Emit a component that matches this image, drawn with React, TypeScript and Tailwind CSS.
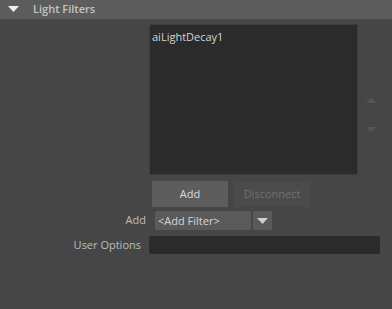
import React from 'react';

const font = { fontFamily: '"Open Sans", "DejaVu Sans", sans-serif' };

export default function App() {
  return (
    <div className="w-[392px] h-[309px] bg-[#464646] text-[11px] text-[#bdbdbd] overflow-hidden" style={font}>
      {/* section header */}
      <div className="h-[19px] bg-[#5d5d5d] flex items-center">
        <svg width="11" height="7" viewBox="0 0 11 7" className="ml-[8px]">
          <polygon points="0,0 11,0 5.5,6" fill="#f0f0f0" />
        </svg>
        <span className="ml-[14px] font-semibold text-[#c4c4c4]">Light Filters</span>
      </div>

      {/* filter list + reorder arrows */}
      <div className="flex mt-[5px] ml-[149px]">
        <div className="w-[209px] h-[151px] bg-[#2b2b2b] border border-[#3c3c3c] rounded-[2px] px-[2px] pt-[4px] leading-[16px] text-[#d6d6d6]">
          aiLightDecay1
        </div>
        <div className="flex flex-col items-center ml-[8px] pt-[74px] gap-[24px]">
          <svg width="10" height="5" viewBox="0 0 10 5">
            <polygon points="0,5 10,5 5,0" fill="#575757" />
          </svg>
          <svg width="10" height="5" viewBox="0 0 10 5">
            <polygon points="0,0 10,0 5,5" fill="#575757" />
          </svg>
        </div>
      </div>

      {/* buttons */}
      <div className="flex ml-[152px] mt-[6px] gap-[6px]">
        <button className="w-[76px] h-[26px] bg-[#5d5d5d] text-[#dcdcdc]">Add</button>
        <button className="w-[76px] h-[26px] bg-[#4b4b4b] text-[#717171]">Disconnect</button>
      </div>

      {/* add filter row */}
      <div className="flex items-center mt-[4px] h-[19px]">
        <span className="w-[146px] text-right">Add</span>
        <div className="ml-[9px] flex gap-[2px]">
          <div className="w-[96px] h-[19px] bg-[#5a5a5a] rounded-[2px] pl-[3px] leading-[19px] text-[#d6d6d6]">&lt;Add Filter&gt;</div>
          <div className="w-[19px] h-[19px] bg-[#5a5a5a] rounded-[2px] flex items-center justify-center">
            <svg width="11" height="6" viewBox="0 0 11 6">
              <polygon points="0,0 11,0 5.5,6" fill="#cfcfcf" />
            </svg>
          </div>
        </div>
      </div>

      {/* user options row */}
      <div className="flex items-center mt-[6px] h-[18px]">
        <span className="w-[141px] text-right">User Options</span>
        <div className="ml-[8px] w-[231px] h-[18px] bg-[#2b2b2b] rounded-[2px]" />
      </div>
    </div>
  );
}
